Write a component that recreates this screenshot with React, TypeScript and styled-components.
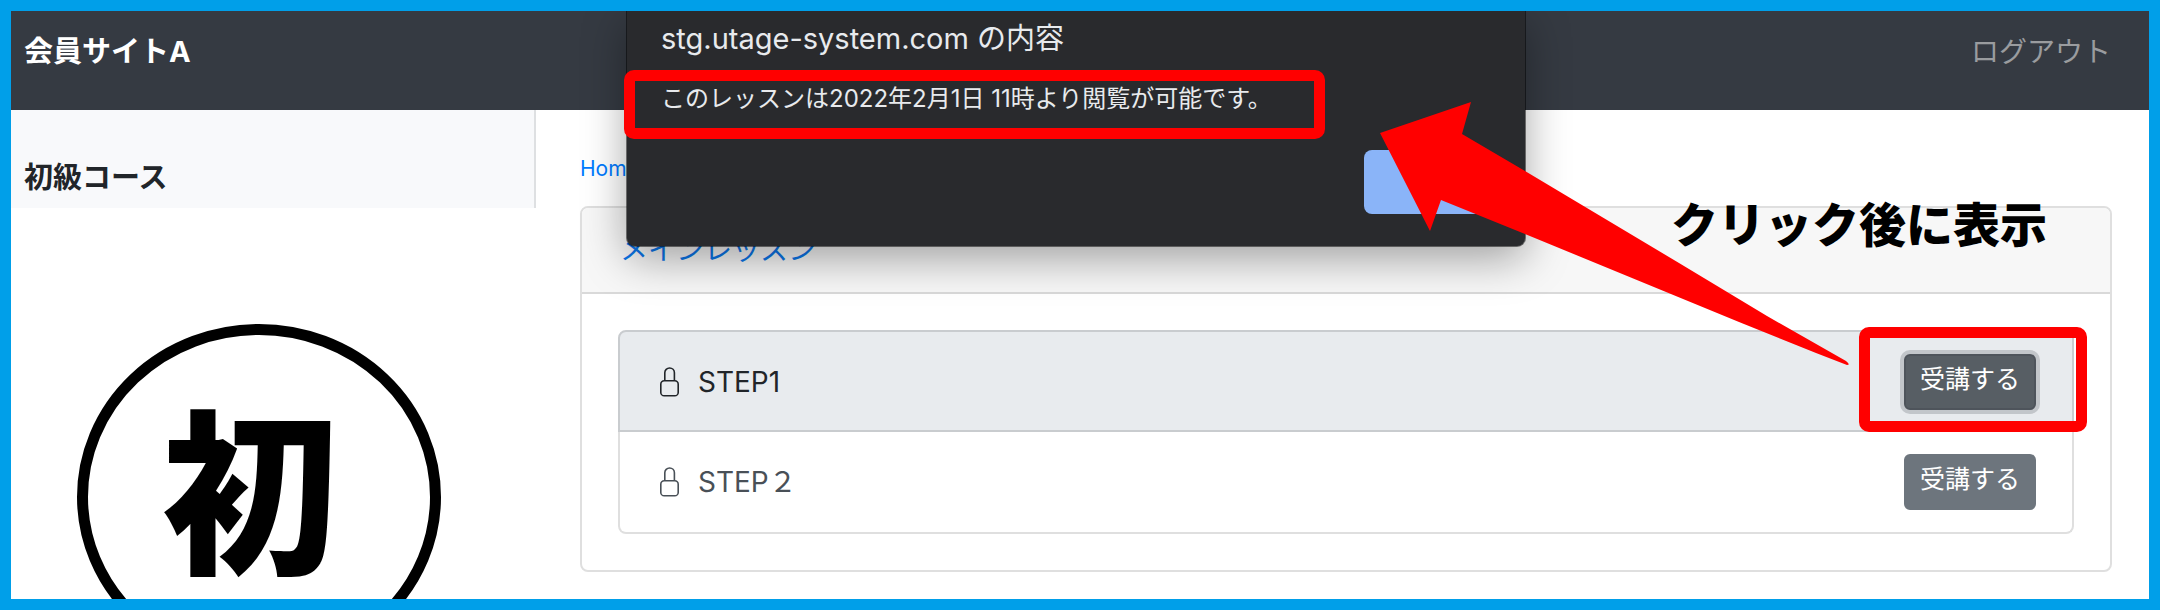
import React from "react";
import styled, { createGlobalStyle } from "styled-components";

const sans = `Inter, "Noto Sans CJK JP", sans-serif`;

const GlobalStyle = createGlobalStyle`
  *, *::before, *::after { box-sizing: border-box; }
  body { margin: 0; background: #fff; color: #212529; font-family: ${sans}; }
  h1, h2, p, ul, ol { margin: 0; padding: 0; }
  ul, ol { list-style: none; }
  a { text-decoration: none; }
  button { font-family: inherit; }
`;

const Frame = styled.div`
  position: relative;
  height: 100vh;
  border: 11px solid #009fe9;
  overflow: hidden;
`;

const Navbar = styled.header`
  display: flex;
  justify-content: space-between;
  align-items: flex-start;
  height: 99px;
  padding: 19px 38px 0 13px;
  background: #353a42;
  line-height: 44px;
`;

const Brand = styled.a`
  color: #fff;
  font-size: 29px;
  font-weight: 700;
`;

const LogoutLink = styled.a`
  color: #9a9c9f;
  font-size: 28px;
`;

const Columns = styled.div`
  display: flex;
  align-items: flex-start;
`;

const Sidebar = styled.aside`
  flex: 0 0 525px;
`;

const CourseTitle = styled.h2`
  padding: 46px 13px 8px;
  border-right: 2px solid #dee0e2;
  background: #f8f9fb;
  font-size: 29px;
  font-weight: 700;
  line-height: 44px;
`;

const CourseEmblem = styled.svg`
  display: block;
  margin: 116px 0 0 66px;

  text {
    font-family: "Noto Sans CJK JP", sans-serif;
    font-size: 176px;
    font-weight: 900;
  }
`;

const Main = styled.main`
  flex: 1;
  min-width: 0;
  padding: 43px 37px 27px 44px;
`;

const Breadcrumb = styled.nav`
  margin-bottom: 21px;
  font-size: 21px;
  line-height: 32px;

  a { color: #007bff; }
`;

const Card = styled.section`
  border: 2px solid #dfdfdf;
  border-radius: 8px;
  overflow: hidden;
`;

const CardHeader = styled.h1`
  padding: 20px 38px;
  border-bottom: 2px solid #d9d9d9;
  background: #f7f7f7;
  font-size: 28px;
  font-weight: 400;
  line-height: 44px;

  a { color: #0b76ea; }
`;

const LessonList = styled.ul`
  padding: 36px;
`;

const Lesson = styled.li<{ $active?: boolean }>`
  display: flex;
  align-items: center;
  gap: 14px;
  padding: 22px 36px ${(p) => (p.$active ? 20 : 22)}px;
  border: 2px solid ${(p) => (p.$active ? "#c9cccf" : "#dfdfdf")};
  background: ${(p) => (p.$active ? "#e8ebee" : "#fff")};
  color: ${(p) => (p.$active ? "#212529" : "#495057")};
  font-size: 28px;
  line-height: 44px;

  &:first-child { border-radius: 8px 8px 0 0; }
  &:last-child { border-top: 0; border-radius: 0 0 8px 8px; }
`;

const LessonName = styled.span`
  flex: 1;
`;

const ButtonSlot = styled.div`
  position: relative;
  display: flex;
`;

const TakeButton = styled.button<{ $active?: boolean }>`
  height: 56px;
  padding: 0 14px 6px;
  border: 2px solid ${(p) => (p.$active ? "#4e545b" : "#6d757d")};
  border-radius: 6px;
  background: ${(p) => (p.$active ? "#575e64" : "#6d757d")};
  box-shadow: ${(p) => (p.$active ? "0 0 0 4px #c2c6ca" : "none")};
  color: #fff;
  font-size: 25px;
  line-height: 40px;
`;

const redOutline = `
  position: absolute;
  border: 11px solid #f00;
  border-radius: 10px;
  pointer-events: none;
`;

const ButtonOutline = styled.span`
  ${redOutline}
  inset: -27px -51px -22px -45px;
`;

const Dialog = styled.div`
  position: absolute;
  top: 0;
  right: 624px;
  width: 898px;
  padding: 8px 34px 32px;
  border-radius: 0 0 8px 8px;
  background: #292a2d;
  box-shadow: 0 0 0 1px rgba(0, 0, 0, 0.5), 0 12px 44px rgba(0, 0, 0, 0.36);
  color: #e8eaed;
  line-height: 40px;
`;

const DialogTitle = styled.h2`
  margin-bottom: 20px;
  font-size: 29px;
  font-weight: 400;
`;

const DialogMessage = styled.p`
  position: relative;
  font-size: 24px;
`;

const MessageOutline = styled.span`
  ${redOutline}
  top: -9px;
  bottom: -20px;
  left: -37px;
  width: 701px;
`;

const DialogActions = styled.div`
  display: flex;
  justify-content: flex-end;
  margin-top: 31px;
`;

const OkButton = styled.button`
  width: 127px;
  height: 64px;
  border: 0;
  border-radius: 8px;
  background: #8ab4f8;
`;

const Arrow = styled.svg`
  position: absolute;
  top: 91px;
  right: 299px;
`;

const Callout = styled.p`
  position: absolute;
  top: 182px;
  right: 102px;
  color: #000;
  font-size: 47px;
  font-weight: 900;
  line-height: 64px;
`;

const LockIcon = () => (
  <svg width="28" height="30" viewBox="0 0 28 30" fill="none" stroke="currentColor" strokeWidth="1.6" aria-hidden="true">
    <rect x="4.8" y="13.8" width="17.4" height="15" rx="3.4" />
    <path d="M8.8 13.6V5.8a4.8 4.8 0 0 1 9.6 0v7.8" />
  </svg>
);

const lessons = [
  { name: "STEP1", active: true },
  { name: "STEP２", active: false },
];

export default function App() {
  return (
    <Frame>
      <GlobalStyle />
      <Navbar>
        <Brand href="#">会員サイトA</Brand>
        <LogoutLink href="#logout">ログアウト</LogoutLink>
      </Navbar>
      <Columns>
        <Sidebar>
          <CourseTitle>初級コース</CourseTitle>
          <CourseEmblem width="364" height="346" viewBox="0 0 364 346">
            <ellipse cx="182" cy="173" rx="176.5" ry="167.5" fill="none" stroke="#000" strokeWidth="11" />
            <text x="173" y="236" textAnchor="middle">初</text>
          </CourseEmblem>
        </Sidebar>
        <Main>
          <Breadcrumb>
            <a href="#home">Home</a>
          </Breadcrumb>
          <Card>
            <CardHeader>
              <a href="#main">メインレッスン</a>
            </CardHeader>
            <LessonList>
              {lessons.map(({ name, active }) => (
                <Lesson key={name} $active={active}>
                  <LockIcon />
                  <LessonName>{name}</LessonName>
                  <ButtonSlot>
                    <TakeButton type="button" $active={active}>受講する</TakeButton>
                    {active && <ButtonOutline />}
                  </ButtonSlot>
                </Lesson>
              ))}
            </LessonList>
          </Card>
        </Main>
      </Columns>
      <Dialog role="dialog" aria-labelledby="dialog-title">
        <DialogTitle id="dialog-title">stg.utage-system.com の内容</DialogTitle>
        <DialogMessage>
          このレッスンは2022年2月1日 11時より閲覧が可能です。
          <MessageOutline />
        </DialogMessage>
        <DialogActions>
          <OkButton type="button" aria-label="OK" />
        </DialogActions>
      </Dialog>
      <Arrow width="470" height="264" viewBox="0 0 470 264" aria-hidden="true">
        <path
          fill="#f00"
          d="M0 31 91 0 82 32 145 69 299 161 387 214 466 259Q471 263 467 263L436 251 359 220 145 132 61 98 50 129Z"
        />
      </Arrow>
      <Callout>クリック後に表示</Callout>
    </Frame>
  );
}
